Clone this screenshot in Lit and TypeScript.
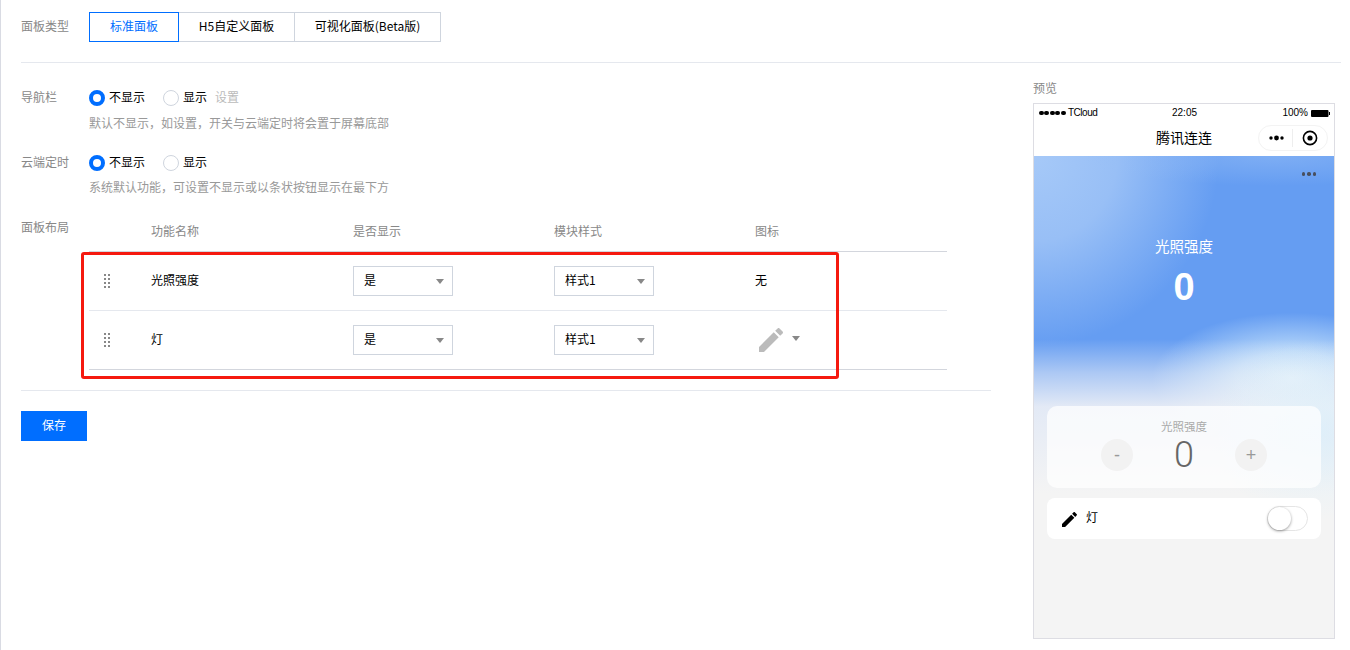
import { LitElement, html, css, svg } from "lit";
import { customElement } from "lit/decorators.js";

const EDIT = svg`<path d="M3 17.25V21h3.75L17.81 9.94l-3.75-3.75L3 17.25zM20.71 7.04c.39-.39.39-1.02 0-1.41l-2.34-2.34c-.39-.39-1.02-.39-1.41 0l-1.83 1.83 3.75 3.75 1.83-1.83z" fill="currentColor"/>`;

@customElement("app-root")
export class AppRoot extends LitElement {
  static styles = css`
    :host {
      display: block;
      width: 1350px;
      height: 650px;
      overflow: hidden;
      background: #fff;
      font-family: "Noto Sans CJK SC", "Liberation Sans", sans-serif;
      font-size: 12px;
      line-height: 18px;
      color: #000;
    }
    * { box-sizing: border-box; }
    .page {
      position: relative;
      height: 650px;
      border-left: 1px solid #d9dbe3;
      padding: 12px 9px 0 20px;
    }
    .type-row { display: flex; height: 30px; align-items: center; }
    .label { width: 68px; flex: none; color: #888; }
    .type-row .label { padding-bottom: 2px; }
    .form-row .label { margin-top: -1px; }
    .form-row.last .label { margin-top: 0; }
    .seg { display: flex; }
    .seg div {
      height: 30px;
      line-height: 26px;
      text-align: center;
      border: 1px solid #cfd5de;
      margin-left: -1px;
    }
    .seg div:first-child { margin-left: 0; }
    .seg .on { border-color: #006eff; color: #006eff; position: relative; z-index: 1; }
    .s1 { width: 90px; }
    .s2 { width: 117px; }
    .s3 { width: 147px; }
    .hr { height: 1px; background: #e5e8ee; }
    .top-hr { margin-top: 20px; }
    .columns { display: flex; }
    .main { width: 970px; flex: none; padding-top: 26px; }
    .form-row { display: flex; margin-bottom: 22px; }
    .form-row.last { margin-bottom: 0; margin-top: 22px; }
    .radios { display: flex; align-items: center; height: 18px; }
    .radio { display: flex; align-items: center; margin-right: 18px; }
    .radio span { margin-top: -2px; }
    .radio i {
      width: 16px; height: 16px; border-radius: 50%;
      border: 1px solid #cfd5de; margin-right: 4px; background: #fff;
    }
    .radio.on i { border: 4.5px solid #006eff; }
    .setting { color: #bbb; margin-left: -10px; margin-top: -2px; }
    .hint { color: #999; margin-top: 7px; }
    .hint.tight { margin-top: 6px; }
    .form-row.second { margin-bottom: 0; }
    .table { width: 858px; margin-left: 0; }
    .t-row {
      display: grid;
      grid-template-columns: 62px 202px 201px 201px 192px;
      align-items: center;
    }
    .t-head {
      height: 34px;
      padding: 4px 0 11px;
      color: #888;
      border-bottom: 1px solid #d3d6dd;
    }
    .t-body { height: 59px; border-bottom: 1px solid #e5e8ee; }
    .t-body.end { border-bottom-color: #d3d6dd; }
    .cell { padding-bottom: 2px; }
    .grip { display: block; margin-left: 15px; color: #888; }
    .select {
      width: 100px; height: 30px; border: 1px solid #cfd5de;
      padding-left: 10px; position: relative;
      display: flex; align-items: center; justify-content: space-between; padding-right: 8px;
    }
    .select span { margin-top: -2px; }
    .caret {
      width: 0; height: 0;
      border-left: 4px solid transparent;
      border-right: 4px solid transparent;
      border-top: 5px solid #888;
      display: block;
    }
    .icon-cell { display: flex; align-items: center; color: #bbb; padding-left: 4px; }
    .icon-cell .caret { margin-left: 9px; margin-top: -3px; }
    .bottom-hr { margin-top: 20px; }
    .save {
      margin-top: 20px; width: 66px; height: 30px; line-height: 28px;
      background: #006eff; color: #fff; text-align: center;
    }
    .redbox {
      position: absolute; left: 80px; top: 252px; width: 758px; height: 127px;
      border: 3px solid #f5190f; border-radius: 3px; pointer-events: none;
    }
    .side { margin-left: 42px; width: 302px; flex: none; }
    .side-title { color: #888; height: 40px; padding-top: 16px; line-height: 18px; }
    .phone {
      width: 302px; height: 536px; border: 1px solid #dddde3;
      display: flex; flex-direction: column; background: #fff;
    }
    .status {
      height: 18px; display: grid; grid-template-columns: 1fr 1fr 1fr; align-items: center;
      font-family: "Liberation Sans", sans-serif; font-size: 10px; line-height: 14px;
      padding: 0 4px 0 5px;
    }
    .st-l { display: flex; align-items: center; }
    .st-l b { width: 4.6px; height: 4.6px; border-radius: 50%; background: #000; margin-right: .9px; }
    .st-l span { margin-left: 1.5px; letter-spacing: -.45px; }
    .st-c { text-align: center; }
    .st-r { display: flex; justify-content: flex-end; align-items: center; }
    .batt { display: block; margin-left: 3px; }
    .nav {
      height: 34px; position: relative; text-align: center;
      font-size: 14px; line-height: 30px;
    }
    .capsule {
      position: absolute; right: 6px; top: 3px; width: 70px; height: 26px;
      border: 1px solid #f3f3f3; border-radius: 13px;
      display: flex; align-items: center; padding-left: 10px;
    }
    .capsule svg { display: block; }
    .capsule .div { width: 1px; height: 18px; background: #eee; margin: 0 9px 0 8px; }
    .body {
      flex: 1; display: flex; flex-direction: column; padding: 0 13px;
      background:
        radial-gradient(ellipse 110px 90px at 95% 57%, rgba(216,240,252,.6) 0%, rgba(216,240,252,0) 100%),
        linear-gradient(180deg, rgba(244,244,244,0) 38%, rgba(244,244,246,.5) 45%, rgba(244,244,246,.88) 52%, #f4f4f4 70%),
        radial-gradient(ellipse 140px 65px at 86% 46%, #d4ecfc 0%, rgba(212,236,252,.75) 40%, rgba(212,236,252,0) 100%),
        radial-gradient(ellipse 190px 30px at 80% 0%, rgba(150,190,246,.5) 0%, rgba(150,190,246,0) 100%),
        radial-gradient(ellipse 185px 190px at 0% 0%, #a6c9f8 0%, #98bff6 45%, rgba(152,191,246,0) 100%),
        #659df2;
    }
    .more {
      display: flex; justify-content: flex-end; gap: 2px; height: 3px;
      margin: 16px 5px 0 0;
    }
    .more b { width: 3.5px; height: 3.5px; border-radius: 50%; background: #484f5e; }
    .hero { text-align: center; color: #fff; margin-top: 61px; height: 170px; }
    .hero-t { font-size: 14.5px; line-height: 20px; }
    .hero-n {
      font-family: "Liberation Sans", sans-serif; font-weight: 700;
      font-size: 38px; line-height: 44px; margin-top: 9px;
    }
    .card {
      height: 82px; border-radius: 10px; background: rgba(255,255,255,.72);
      text-align: center; padding-top: 12px; color: #aaa; font-size: 11.5px; line-height: 16px;
    }
    .stepper { display: flex; justify-content: center; align-items: center; height: 32px; margin-top: 5px; }
    .step {
      width: 32px; height: 32px; border-radius: 50%; background: #f2f2f2;
      color: #999; font-family: "Liberation Sans", sans-serif; font-size: 18px; line-height: 32px;
    }
    .num {
      width: 102px; font-family: Roboto, sans-serif; font-weight: 300; font-size: 36px; line-height: 32px; color: #666;
    }
    .row-card {
      height: 41px; margin-top: 10px; background: #fff; border-radius: 8px;
      display: flex; align-items: center; padding: 0 13px 0 15px;
    }
    .row-card svg { display: block; margin-right: 9px; margin-top: 1px; }
    .row-card span { flex: 1; margin-top: -3px; }
    .switch {
      width: 41px; height: 25px; border-radius: 13px; border: 1px solid #e5e5e5;
      position: relative; background: #fff;
    }
    .switch i {
      display: block; position: absolute; left: 0; top: 0; width: 23px; height: 23px; border-radius: 50%;
      background: #fff; box-shadow: 0 1px 3px rgba(0,0,0,.4);
    }
  `;

  private grip() {
    const cells = [];
    for (let r = 0; r < 4; r++) for (let c = 0; c < 2; c++) cells.push(svg`<rect x=${c * 4} y=${r * 4} width="2" height="2" fill="currentColor"/>`);
    return html`<svg class="grip" width="6" height="14" viewBox="0 0 6 14">${cells}</svg>`;
  }

  private sel(t: string) {
    return html`<div class="select"><span>${t}</span><i class="caret"></i></div>`;
  }

  private radios(extra = false) {
    return html`<div class="radios">
      <div class="radio on"><i></i><span>不显示</span></div>
      <div class="radio"><i></i><span>显示</span></div>
      ${extra ? html`<span class="setting">设置</span>` : ""}
    </div>`;
  }

  render() {
    return html`<div class="page">
      <div class="type-row">
        <div class="label">面板类型</div>
        <div class="seg">
          <div class="s1 on">标准面板</div>
          <div class="s2">H5自定义面板</div>
          <div class="s3">可视化面板(Beta版)</div>
        </div>
      </div>
      <div class="hr top-hr"></div>
      <div class="columns">
        <div class="main">
          <div class="form-row">
            <div class="label">导航栏</div>
            <div>${this.radios(true)}<div class="hint">默认不显示，如设置，开关与云端定时将会置于屏幕底部</div></div>
          </div>
          <div class="form-row second">
            <div class="label">云端定时</div>
            <div>${this.radios()}<div class="hint tight">系统默认功能，可设置不显示或以条状按钮显示在最下方</div></div>
          </div>
          <div class="form-row last">
            <div class="label">面板布局</div>
            <div class="table">
              <div class="t-row t-head"><div></div><div>功能名称</div><div>是否显示</div><div>模块样式</div><div>图标</div></div>
              <div class="t-row t-body">
                ${this.grip()}<div class="cell">光照强度</div>${this.sel("是")}${this.sel("样式1")}<div class="cell">无</div>
              </div>
              <div class="t-row t-body end">
                ${this.grip()}<div class="cell">灯</div>${this.sel("是")}${this.sel("样式1")}
                <div class="icon-cell"><svg width="24" height="24" viewBox="3 3 18 18">${EDIT}</svg><i class="caret"></i></div>
              </div>
            </div>
          </div>
          <div class="hr bottom-hr"></div>
          <div class="save">保存</div>
        </div>
        <div class="side">
          <div class="side-title">预览</div>
          <div class="phone">
            <div class="status">
              <div class="st-l"><b></b><b></b><b></b><b></b><b></b><span>TCloud</span></div>
              <div class="st-c">22:05</div>
              <div class="st-r">100%<svg class="batt" width="19" height="7" viewBox="0 0 19 7"><rect width="17.5" height="7" rx="1"/><rect x="18" y="2" width="1" height="3"/></svg></div>
            </div>
            <div class="nav">腾讯连连
              <div class="capsule">
                <svg width="15" height="6" viewBox="0 0 15 6"><circle cx="2" cy="3" r="1.7"/><circle cx="7.5" cy="3" r="2.4"/><circle cx="13" cy="3" r="1.7"/></svg>
                <i class="div"></i>
                <svg width="16" height="16" viewBox="0 0 16 16"><circle cx="8" cy="8" r="6.6" fill="none" stroke="#000" stroke-width="1.6"/><circle cx="8" cy="8" r="2.6"/></svg>
              </div>
            </div>
            <div class="body">
              <div class="more"><b></b><b></b><b></b></div>
              <div class="hero">
                <div class="hero-t">光照强度</div>
                <div class="hero-n">0</div>
              </div>
              <div class="card">
                光照强度
                <div class="stepper"><div class="step">-</div><div class="num">0</div><div class="step">+</div></div>
              </div>
              <div class="row-card">
                <svg width="15" height="15" viewBox="3 3 18 18">${EDIT}</svg>
                <span>灯</span>
                <div class="switch"><i></i></div>
              </div>
            </div>
          </div>
        </div>
      </div>
      <div class="redbox"></div>
    </div>`;
  }
}
